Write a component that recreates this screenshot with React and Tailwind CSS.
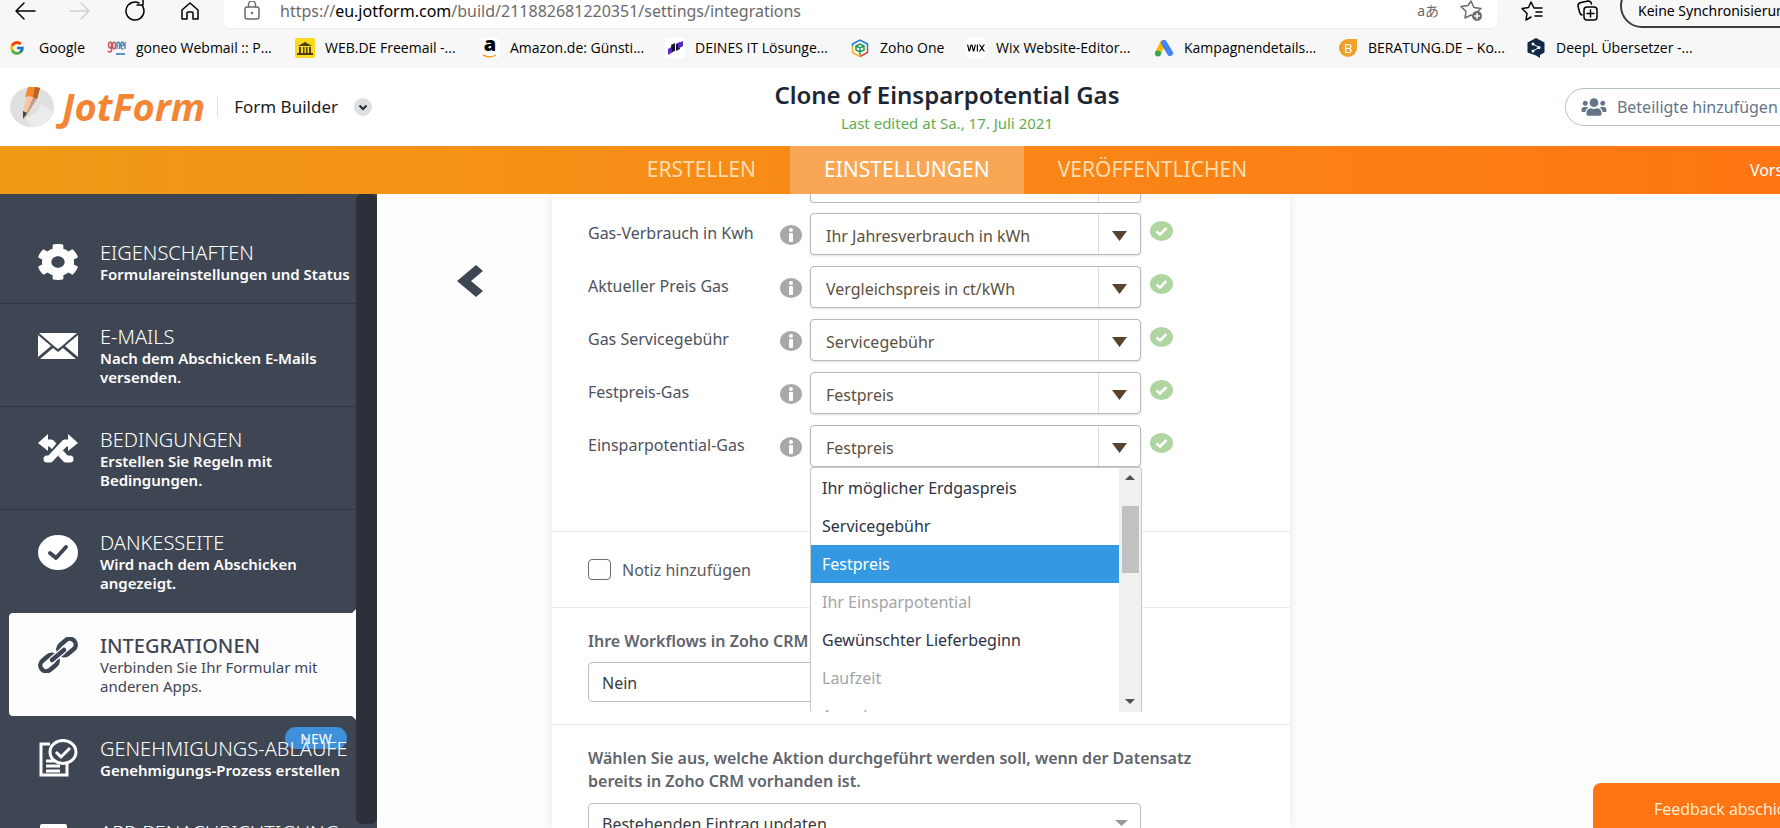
import { FaCog, FaUsers } from "react-icons/fa";
import { FcGoogle } from "react-icons/fc";
import { SiWix } from "react-icons/si";

const stroke = {
  fill: "none",
  stroke: "currentColor",
  strokeWidth: 1.5,
  strokeLinecap: "round",
  strokeLinejoin: "round",
};

const bookmarks = [
  { text: "Google", icon: <FcGoogle className="size-4" />, width: "w-[97px]" },
  {
    text: "goneo Webmail :: P...",
    icon: (
      <svg className="size-5" viewBox="0 0 20 20">
        <g fill="none" strokeWidth="1.500">
          <path d="M4 4a1.500 3 0 1 0 .1 0M5.500 4v9q-1.500 2-4 0M8 4a1.500 3.500 0 1 0 .1 0" stroke="#cc5560" />
          <path d="M11 11V4M11 5q2.500-2 2.500 1v5M15 7.500h2.500q0-3.500-1.500-3.500t-1 4 2.500 2.500M19 4v7" stroke="#5b86b4" />
        </g>
        <path d="M10 16h9" stroke="#5d93c8" strokeWidth="2" />
      </svg>
    ),
    width: "w-[189px]",
  },
  {
    text: "WEB.DE Freemail -...",
    icon: (
      <svg className="size-5" viewBox="0 0 20 20">
        <rect width="20" height="20" rx="2" fill="#fbd91c" />
        <path d="M3 8l7-4 7 4zM4 9h2v6H4zM8 9h1.500v6H8zM11 9h1.500v6H11zM14 9h2v6h-2zM2 15h16v2H2z" fill="#4b3f0c" />
      </svg>
    ),
    width: "w-[185px]",
  },
  {
    text: "Amazon.de: Günsti...",
    icon: (
      <span className="flex size-5 flex-col items-center rounded-sm bg-white">
        <span className="h-4 text-xl leading-3 font-extrabold">a</span>
        <svg className="h-1 w-4" viewBox="0 0 16 4">
          <path d="M1 1q7 4 13 0" fill="none" stroke="#f79a1c" strokeWidth="1.500" />
        </svg>
      </span>
    ),
    width: "w-[185px]",
  },
  {
    text: "DEINES IT Lösunge...",
    icon: (
      <svg className="size-5" viewBox="0 0 20 20">
        <rect width="20" height="20" fill="#fff" />
        <path d="M3 11l5-3v6l-5 3z" fill="#5b2bc8" />
        <path d="M6 7l4-2v8l-3 1zM11 6l4-2v7l-4 2z" fill="#1c1038" />
        <path d="M13 5l5-2v5l-5 3z" fill="#5b2bc8" />
      </svg>
    ),
    width: "w-[185px]",
  },
  {
    text: "Zoho One",
    icon: (
      <svg className="size-5" viewBox="0 0 20 20" fill="none" strokeWidth="1.500">
        <path d="M2.500 8V6L10 2l7.500 4v3" stroke="#2277c9" />
        <path d="M17.500 9v5.500L10 18.500" stroke="#e0473c" />
        <path d="M10 18.500L2.500 14.500V8" stroke="#f0b323" />
        <path d="M10 17v-7M6 8l4-2 4 2v4l-4 2-4-2zM6 8l4 2 4-2" stroke="#1f9a55" />
      </svg>
    ),
    width: "w-[116px]",
  },
  {
    text: "Wix Website-Editor...",
    icon: (
      <span className="flex size-5 items-center justify-center rounded-sm bg-white">
        <SiWix className="size-[18px]" />
      </span>
    ),
    width: "w-[188px]",
  },
  {
    text: "Kampagnendetails...",
    icon: (
      <svg className="size-5" viewBox="0 0 20 20" strokeLinecap="round" strokeWidth="6">
        <path d="M9 5L4 15" stroke="#fbbc04" />
        <path d="M10 5l6 10" stroke="#4285f4" />
        <circle cx="4" cy="15.500" r="3" fill="#34a853" />
      </svg>
    ),
    width: "w-[184px]",
  },
  {
    text: "BERATUNG.DE – Ko...",
    icon: (
      <svg className="size-5" viewBox="0 0 20 20">
        <path d="M1 10a9 9 0 0 1 9-9h9v9a9 9 0 0 1-18 0z" fill="#f0a12c" />
        <text x="6" y="15" fontSize="13" fontFamily="Open Sans" fill="#fff">B</text>
      </svg>
    ),
    width: "w-[188px]",
  },
  {
    text: "DeepL Übersetzer -...",
    icon: (
      <svg className="size-5" viewBox="0 0 20 20">
        <path d="M10 0l8.500 4.500v10L14 17v3l-4-2.500-8.500-3v-10z" fill="#0f2b46" />
        <path d="M7 6l6 3.500L7 13" fill="none" stroke="#fff" />
        <circle cx="7" cy="6" r="1.500" fill="#fff" />
        <circle cx="13" cy="9.500" r="1.500" fill="#fff" />
        <circle cx="7" cy="13" r="1.500" fill="#fff" />
      </svg>
    ),
    width: "w-[188px]",
  },
];

const menu = [
  {
    title: "EIGENSCHAFTEN",
    text: "Formulareinstellungen und Status",
    icon: <FaCog className="h-[36px] w-[40px]" viewBox="16 8 480 496" preserveAspectRatio="none" />,
  },
  {
    title: "E-MAILS",
    text: "Nach dem Abschicken E-Mails versenden.",
    icon: (
      <svg className="h-[26px] w-[40px]" viewBox="0 0 40 26" fill="currentColor">
        <path d="M1 0h38L24 13l-4 3-4-3zM0 2l13 11L0 24zM40 2v22L27 13zM2 26l13-11 5 4 5-4 13 11z" />
      </svg>
    ),
  },
  {
    title: "BEDINGUNGEN",
    text: "Erstellen Sie Regeln mit Bedingungen.",
    icon: (
      <svg className="h-[30px] w-[40px]" viewBox="0 0 40 30">
        <path d="M8 9h5l15 16h4" fill="none" stroke="currentColor" strokeWidth="7" strokeLinecap="round" strokeLinejoin="round" />
        <path d="M24 10L14 22" stroke="#3f4653" strokeWidth="9" />
        <path d="M32 9h-5L12 25H9" fill="none" stroke="currentColor" strokeWidth="7" strokeLinecap="round" strokeLinejoin="round" />
        <path d="M0 9l10-9v17zM40 9L30 0v17z" fill="currentColor" />
      </svg>
    ),
  },
  {
    title: "DANKESSEITE",
    text: "Wird nach dem Abschicken angezeigt.",
    icon: (
      <svg className="h-[35px] w-[40px]" viewBox="0 0 40 35">
        <ellipse cx="20" cy="17.500" rx="20" ry="17.500" fill="currentColor" />
        <path d="M12 18l6 5 10-11" fill="none" stroke="#3f4653" strokeWidth="4" strokeLinecap="round" strokeLinejoin="round" />
      </svg>
    ),
  },
  {
    title: "INTEGRATIONEN",
    text: "Verbinden Sie Ihr Formular mit anderen Apps.",
    active: true,
    icon: (
      <svg className="h-[36px] w-[40px]" viewBox="0 0 40 36" fill="none" stroke="currentColor" strokeWidth="4.500">
        <rect x="-9.500" y="-6" width="19" height="12" rx="6" transform="translate(29 10) rotate(-40)" />
        <rect x="-9.500" y="-6" width="19" height="12" rx="6" transform="translate(11 26) rotate(-40)" />
        <path d="M14 23l12-10" stroke="#fff" strokeWidth="7" />
        <path d="M14 23l12-10" strokeLinecap="round" />
      </svg>
    ),
  },
  {
    title: "GENEHMIGUNGS-ABLÄUFE",
    text: "Genehmigungs-Prozess erstellen",
    badge: "NEW",
    icon: (
      <svg className="h-[38px] w-[40px]" viewBox="0 0 40 38" fill="none" stroke="currentColor" strokeWidth="3">
        <path d="M12 5H3v31h26V24M8 22h8M8 27h14M8 32h14" />
        <ellipse cx="25" cy="13" rx="13" ry="11.500" />
        <path d="M18 13l5 5 9-9" />
      </svg>
    ),
  },
  {
    title: "APP-BENACHRICHTIGUNG",
    text: "",
    icon: (
      <svg className="h-[36px] w-[40px]" viewBox="0 0 40 36">
        <rect x="2" width="27" height="36" rx="2" fill="currentColor" />
      </svg>
    ),
  },
];

const fields = [
  { label: "Gas-Verbrauch in Kwh", value: "Ihr Jahresverbrauch in kWh" },
  { label: "Aktueller Preis Gas", value: "Vergleichspreis in ct/kWh" },
  { label: "Gas Servicegebühr", value: "Servicegebühr" },
  { label: "Festpreis-Gas", value: "Festpreis" },
  { label: "Einsparpotential-Gas", value: "Festpreis", open: true },
];

const options = [
  { text: "Ihr möglicher Erdgaspreis" },
  { text: "Servicegebühr" },
  { text: "Festpreis", selected: true },
  { text: "Ihr Einsparpotential", disabled: true },
  { text: "Gewünschter Lieferbeginn" },
  { text: "Laufzeit", disabled: true },
  { text: "Anrede", disabled: true },
];

function BrowserBar() {
  return (
    <div className="bg-[#f7f7f7] text-black">
      <div className="flex h-7 items-stretch">
        <div className="flex w-[224px] shrink-0 items-center gap-[35px] pb-[6px] pl-[15px]">
          <button aria-label="Zurück">
            <svg className="size-5 overflow-visible" viewBox="0 0 20 20" {...stroke}>
              <path d="M20 10H1M9 2l-8 8 8 8" />
            </svg>
          </button>
          <button aria-label="Vorwärts" className="text-[#cfcfcf]" disabled>
            <svg className="size-5 overflow-visible" viewBox="0 0 20 20" {...stroke}>
              <path d="M0 10h19M11 2l8 8-8 8" />
            </svg>
          </button>
          <button aria-label="Neu laden">
            <svg className="size-5 overflow-visible" viewBox="0 0 20 20" {...stroke}>
              <path d="M14 2a9 9 0 1 0 5 8q0-3-2-6M12 4h6V-1" />
            </svg>
          </button>
          <button aria-label="Startseite">
            <svg className="size-5 overflow-visible" viewBox="0 0 20 20" {...stroke}>
              <path d="M2 9l8-7 8 7v9h-5v-6q0-1-1-1H8q-1 0-1 1v6H2z" />
            </svg>
          </button>
        </div>
        <div className="flex w-[1273px] shrink-0 items-center rounded-b-md bg-white pr-3 pb-[6px] pl-5 text-[#6b6b6b] shadow-xs">
          <svg className="mr-5 h-5 w-4 shrink-0" viewBox="0 0 16 20" {...stroke}>
            <rect x="1" y="6" width="14" height="12" rx="2" />
            <path d="M4.500 6V3.500a3.500 3.500 0 0 1 7 0V6" />
            <circle cx="8" cy="12" r="0.500" />
          </svg>
          <span className="flex-1 text-base whitespace-nowrap">
            https://<span className="text-black">eu.jotform.com</span>
            /build/211882681220351/settings/integrations
          </span>
          <button aria-label="Übersetzen" className="mr-5 text-sm">
            aあ
          </button>
          <button aria-label="Zu Favoriten hinzufügen" className="mr-0.5">
            <svg className="size-6" viewBox="0 0 24 24" {...stroke}>
              <path d="M12 2l3 6.500 7 1-5 4.500 1 5-6-3-6 3 1-6.500-5-5 7-1z" />
              <circle cx="18" cy="17" r="5" fill="currentColor" stroke="none" />
              <path d="M18 14.500v5M15.500 17h5" stroke="#fff" />
            </svg>
          </button>
        </div>
        <div className="flex shrink-0 items-center gap-8 pb-[6px] pl-[23px]">
          <button aria-label="Favoriten">
            <svg className="size-6" viewBox="0 0 24 24" {...stroke}>
              <path d="M20 9h-6L11 3 8.500 8.500l-6.500 1 5 5L6 21l5-3M16 13h6M15 17h7M17 9h5" />
            </svg>
          </button>
          <button aria-label="Sammlungen">
            <svg className="size-6" viewBox="0 0 24 24" {...stroke}>
              <rect x="8" y="8" width="13" height="13" rx="3" />
              <path d="M14.500 11v7M11 14.500h7M6 16q-2-.5-2.500-3L2 7q0-3 3-3.500L12 2q3 0 3.500 3" />
            </svg>
          </button>
        </div>
        <button className="-mt-4 ml-5 w-[260px] shrink-0 rounded-full border-2 border-[#3c3c3c] pt-2.5 pl-4 text-left text-sm whitespace-nowrap">
          Keine Synchronisierung
        </button>
      </div>
      <nav className="flex h-10 items-center pl-[9px] font-['Open_Sans',sans-serif] text-sm">
        {bookmarks.map((b) => (
          <a key={b.text} href="#" className={`flex shrink-0 items-center gap-2.5 whitespace-nowrap ${b.width}`}>
            <span className="flex w-5 shrink-0 items-center">{b.icon}</span>
            {b.text}
          </a>
        ))}
      </nav>
    </div>
  );
}

function Header() {
  return (
    <header>
      <div className="grid h-[78px] grid-cols-[1fr_auto_1fr] items-center bg-white">
        <div className="flex items-center pl-2.5">
          <svg className="h-10 w-11" viewBox="0 0 44 40">
            <ellipse cx="22" cy="20" rx="22" ry="20" fill="#e0e0e1" />
            <path d="M15 31q14-4 16-14l12 8q-6 14-21 15z" fill="#ececed" />
            <path d="M17 6l11 3-10 17-4 6-1-8z" fill="#f3c8a8" />
            <path d="M24 8l4 2-10 16-4 6z" fill="#c79c82" />
            <path d="M18 0q8-1 12 1l-3 11q-6-4-12-2z" fill="#f58a2c" />
            <path d="M25 0l5 1-3 11-4-2z" fill="#b8642a" />
            <path d="M13 24l4 2-4 6z" fill="#45403e" />
          </svg>
          <span className="ml-2 pb-0.5 font-['Open_Sans',sans-serif] text-[38px] leading-10 font-bold text-[#f48534] italic">JotForm</span>
          <span className="ml-3 h-5 w-px bg-[#dddddd]" />
          <button className="ml-4 flex items-center gap-4 text-[17px] text-[#1b1b1b]">
            Form Builder
            <svg className="size-[18px]" viewBox="0 0 18 18">
              <circle cx="9" cy="9" r="9" fill="#dedfe0" />
              <path d="M5.500 7.500L9 11l3.500-3.500" fill="none" stroke="#222b36" strokeWidth="2" />
            </svg>
          </button>
        </div>
        <div className="text-center">
          <h1 className="text-2xl leading-8 font-semibold text-[#1d2733]">Clone of Einsparpotential Gas</h1>
          <p className="text-[15px] leading-6 text-[#62ad52]">Last edited at Sa., 17. Juli 2021</p>
        </div>
        <div className="flex justify-end">
          <button className="flex h-[38px] w-[329px] items-center gap-2.5 rounded-full border border-[#b3c2c8] pl-[15px] text-base text-[#66758a]">
            <FaUsers className="h-5 w-[26px]" />
            Beteiligte hinzufügen
          </button>
        </div>
      </div>
      <nav className="grid h-12 grid-cols-[1fr_auto_1fr] bg-linear-to-r from-[#f09a17] via-[#fa8416] via-60% to-[#ff7313] text-[21px] text-[#ffdcae]">
        <span />
        <div className="flex">
          <a href="#" className="flex items-center px-[34px]">ERSTELLEN</a>
          <a href="#" className="flex items-center bg-[#faa755] px-[34px] text-white">EINSTELLUNGEN</a>
          <a href="#" className="flex items-center px-[34px]">VERÖFFENTLICHEN</a>
        </div>
        <div className="flex items-center justify-end">
          <a href="#" className="w-[144px] text-base text-white">Vorschau</a>
        </div>
      </nav>
    </header>
  );
}

function Sidebar() {
  return (
    <aside className="flex w-[377px] shrink-0 bg-[#3f4653]">
      <nav className="w-[356px] overflow-hidden pt-[26px] text-white">
        {menu.map((m, i) => (
          <a
            key={m.title}
            href="#"
            className={
              m.active
                ? "relative ml-[9px] flex h-[103px] rounded-l bg-[#fdfdfd] pt-[21px] pl-[29px] text-[#3f4653]"
                : `relative flex pt-[21px] pb-[19px] pl-[38px] ${i < 3 ? "border-b border-[#2f3541]" : "border-b border-transparent"}`
            }
          >
            {m.active && (
              <svg className="absolute -inset-y-1 right-0 h-[111px] w-1" viewBox="0 0 4 111" fill="#fdfdfd">
                <path d="M4 0v4H0zM4 111v-4H0z" />
              </svg>
            )}
            <span className="mt-[3px] mr-[22px] flex h-[36px] w-10 shrink-0 items-center">{m.icon}</span>
            {m.badge && (
              <span className="absolute top-[11px] right-[9px] h-[22px] w-[62px] rounded-full bg-[#3e90db] text-center text-sm leading-6">
                {m.badge}
              </span>
            )}
            <span className="relative">
              <span className={`block text-xl leading-6 whitespace-nowrap ${m.active ? "font-medium" : "font-light"}`}>
                {m.title}
              </span>
              <span className={`block text-[15px] leading-[19px] ${m.active ? "pr-5" : "font-semibold"} ${m.text.length < 33 ? "whitespace-nowrap" : "pr-8"}`}>
                {m.text}
              </span>
            </span>
          </a>
        ))}
      </nav>
      <div className="mb-1 flex-1 rounded-md bg-[#2d3039]" />
    </aside>
  );
}

function MappingSelect({ id, value }) {
  return (
    <div className="relative w-[331px] shrink-0">
      <select
        id={id}
        className="block h-[42px] w-full appearance-none rounded border border-[#b9b9b9] bg-white pt-1 pl-[15px] text-base text-[#5c5140] shadow-sm"
      >
        <option>{value}</option>
      </select>
      <span className="pointer-events-none absolute inset-y-px right-px flex w-[42px] items-center justify-center border-l border-[#dedede]">
        <svg className="mt-1 h-[10px] w-[15px]" viewBox="0 0 15 10">
          <path d="M0 0h15L7.500 10z" fill="#57432f" />
        </svg>
      </span>
    </div>
  );
}

function OptionList() {
  return (
    <div className="absolute top-full left-0 z-10 flex h-[246px] w-[332px] overflow-hidden rounded border border-[#c6c6c6] border-b-transparent bg-white">
      <ul role="listbox" aria-label="Einsparpotential-Gas" className="flex-1 pt-px text-base">
        {options.map((o) => (
          <li
            key={o.text}
            role="option"
            aria-selected={Boolean(o.selected)}
            className={`h-[38px] pl-[11px] leading-[38px] ${
              o.selected ? "bg-[#3599e2] text-white" : o.disabled ? "text-[#a3a5a9]" : "text-[#2c3345]"
            }`}
          >
            {o.text}
          </li>
        ))}
      </ul>
      <div className="flex w-[22px] flex-col items-center bg-[#f0f0f0] pt-[7px] pb-2">
        <svg className="h-[5px] w-[10px]" viewBox="0 0 10 5">
          <path d="M0 5h10L5 0z" fill="#505050" />
        </svg>
        <span className="mt-[26px] h-[67px] w-[17px] bg-[#c1c1c1]" />
        <svg className="mt-auto h-[5px] w-[10px]" viewBox="0 0 10 5">
          <path d="M0 0h10L5 5z" fill="#505050" />
        </svg>
      </div>
    </div>
  );
}

function FieldRow({ id, field }) {
  return (
    <div className="flex">
      <label htmlFor={id} className="w-[192px] text-base leading-10 whitespace-nowrap text-[#4d525c]">
        {field.label}
      </label>
      <svg className="mt-3 mr-2 h-5 w-[22px] shrink-0" viewBox="0 0 22 20">
        <ellipse cx="11" cy="10" rx="11" ry="10" fill="#a8a8a8" />
        <circle cx="11" cy="5" r="2" fill="#fff" />
        <rect x="9" y="8" width="4" height="9" rx="1" fill="#fff" />
      </svg>
      <div className="relative">
        <MappingSelect id={id} value={field.value} />
        {field.open && <OptionList />}
      </div>
      <svg className="mt-2 ml-[9px] h-5 w-[23px] shrink-0" viewBox="0 0 23 20">
        <ellipse cx="11.500" cy="10" rx="11.500" ry="10" fill="#afd5a1" />
        <path d="M6.500 10.500l3.500 3 6.500-6.500" fill="none" stroke="#fff" strokeWidth="2.500" />
      </svg>
    </div>
  );
}

function PlainSelect({ id, value }) {
  return (
    <div className="relative w-[553px]">
      <select
        id={id}
        className="block h-10 w-full appearance-none rounded border border-[#bdbdbd] bg-white pt-0.5 pl-[13px] text-base text-[#3a3a3a]"
      >
        <option>{value}</option>
      </select>
      <svg className="pointer-events-none absolute top-[17px] right-[13px] h-[6px] w-[13px]" viewBox="0 0 13 6">
        <path d="M0 0h13L6.500 6z" fill="#999" />
      </svg>
    </div>
  );
}

function Panel() {
  return (
    <section className="w-[738px] shrink-0 bg-white shadow-[0_0_10px_rgba(0,0,0,0.09)]">
      <div className="border-b border-[#ececf0] pb-[64px] pl-9">
        <div className="mb-2.5 flex h-[9px] items-end overflow-hidden pl-[222px]">
          <MappingSelect id="field-top" value="" />
        </div>
        <div className="flex flex-col gap-[11px]">
          {fields.map((f, i) => (
            <FieldRow key={f.label} id={`field-${i}`} field={f} />
          ))}
        </div>
      </div>
      <div className="flex h-[76px] items-center gap-[11px] border-b border-[#ececf0] pl-9">
        <input
          id="note"
          type="checkbox"
          className="h-[21px] w-[23px] appearance-none rounded border border-[#6d6d6d] bg-white"
        />
        <label htmlFor="note" className="text-base text-[#565a61]">
          Notiz hinzufügen
        </label>
      </div>
      <div className="border-b border-[#ececf0] pt-[22px] pb-[22px] pl-9">
        <label htmlFor="workflows" className="mb-[9px] block text-base leading-[23px] font-semibold text-[#60646b]">
          Ihre Workflows in Zoho CRM
        </label>
        <PlainSelect id="workflows" value="Nein" />
      </div>
      <div className="pt-[22px] pr-16 pl-9">
        <label htmlFor="action" className="mb-[10px] block text-base leading-[23px] font-semibold text-[#60646b]">
          Wählen Sie aus, welche Aktion durchgeführt werden soll, wenn der Datensatz bereits in Zoho CRM vorhanden ist.
        </label>
        <PlainSelect id="action" value="Bestehenden Eintrag updaten" />
      </div>
    </section>
  );
}

export default function App() {
  return (
    <div className="h-screen overflow-hidden bg-[#fdfdfd] font-['Noto_Sans','Noto_Sans_CJK_JP',sans-serif]">
      <div className="flex h-full w-[106.4%] flex-col">
        <BrowserBar />
        <Header />
        <main className="flex min-h-0 flex-1 overflow-hidden">
          <Sidebar />
          <button aria-label="Zurück zur Liste" className="mt-[70px] mr-[69px] ml-[80px] h-[34px] w-[26px] shrink-0">
            <svg className="h-full w-full" viewBox="0 0 26 34">
              <path d="M19 1l7 6-12 10 12 10-7 6L0 17z" fill="#3f4653" />
            </svg>
          </button>
          <Panel />
        </main>
      </div>
      <button className="fixed right-0 bottom-0 h-[45px] w-[187px] overflow-hidden rounded-tl-lg bg-[#ff7413] pt-1.5 pl-[61px] text-left font-['Open_Sans',sans-serif] text-base whitespace-nowrap text-[#fff1da]">
        Feedback abschicken
      </button>
    </div>
  );
}
